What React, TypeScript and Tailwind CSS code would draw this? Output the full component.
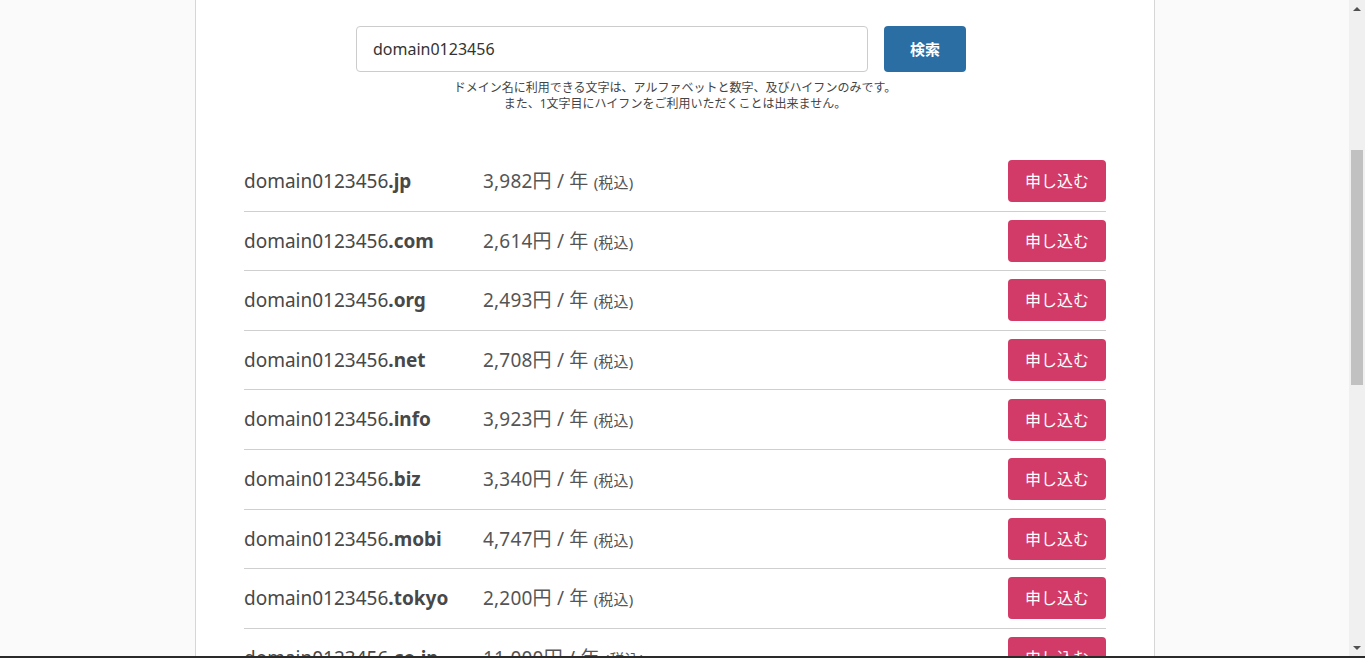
const domains = [
  { tld: '.jp', price: '3,982' },
  { tld: '.com', price: '2,614' },
  { tld: '.org', price: '2,493' },
  { tld: '.net', price: '2,708' },
  { tld: '.info', price: '3,923' },
  { tld: '.biz', price: '3,340' },
  { tld: '.mobi', price: '4,747' },
  { tld: '.tokyo', price: '2,200' },
  { tld: '.co.jp', price: '11,000' },
];

const DomainRow = ({ name, tld, price }: { name: string; tld: string; price: string }) => (
  <li className="flex h-[59.6px] items-center border-b border-[#cfcfcf]">
    <div className="w-[239px] text-[19px] text-[#484848]">
      {name}
      <span className="font-bold">{tld}</span>
    </div>
    <div className="flex-1 text-[19px] tracking-[0.2px] text-[#555]">
      {price}円 / 年 <span className="text-[15px]">(税込)</span>
    </div>
    <button className="h-[42px] w-[98px] rounded-[4px] bg-[#d23a67] text-[16px] text-white">申し込む</button>
  </li>
);

const ScrollBar = () => (
  <div className="flex w-4 flex-col items-center bg-[#f0f0f0]">
    <div className="flex h-[17px] w-full items-center justify-center">
      <div className="h-0 w-0 border-x-[4px] border-b-[4px] border-x-transparent border-b-[#505050]" />
    </div>
    <div className="h-[133px]" />
    <div className="h-[235px] w-[12px] bg-[#c1c1c1]" />
    <div className="flex-1" />
    <div className="flex h-[17px] w-full items-center justify-center">
      <div className="h-0 w-0 border-x-[4px] border-t-[4px] border-x-transparent border-t-[#505050]" />
    </div>
  </div>
);

const App = () => {
  const name = 'domain0123456';

  return (
    <div
      className="flex h-[658px] w-[1365px] flex-col overflow-hidden"
      style={{ fontFamily: '"Noto Sans", "Noto Sans CJK JP", sans-serif' }}
    >
      <div className="flex min-h-0 flex-1">
        <main className="flex min-w-0 flex-1 justify-center overflow-hidden bg-[#fafafa] pl-px">
          <div className="w-[960px] shrink-0 border-x border-[#d6d6d6] bg-white pt-[26px]">
            <form className="flex gap-[16px] pl-[160px]" onSubmit={(e) => e.preventDefault()}>
              <input
                className="h-[46px] w-[512px] rounded-[4px] border border-[#cccccc] px-4 text-[16px] text-[#333] outline-none"
                defaultValue={name}
              />
              <button className="h-[46px] w-[82px] rounded-[4px] bg-[#2b6ea4] text-[15px] font-bold text-white">検索</button>
            </form>
            <p className="mt-[8px] text-center text-[12px] leading-[16px] text-[#444]">
              ドメイン名に利用できる文字は、アルファベットと数字、及びハイフンのみです。
              <br />
              また、1文字目にハイフンをご利用いただくことは出来ません。
            </p>
            <ul className="mt-[40px] px-[48px]">
              {domains.map((d) => (
                <DomainRow key={d.tld} name={name} tld={d.tld} price={d.price} />
              ))}
            </ul>
          </div>
        </main>
        <ScrollBar />
      </div>
      <div className="h-[2px] bg-[#2a2a2a]" />
    </div>
  );
};

export default App;
